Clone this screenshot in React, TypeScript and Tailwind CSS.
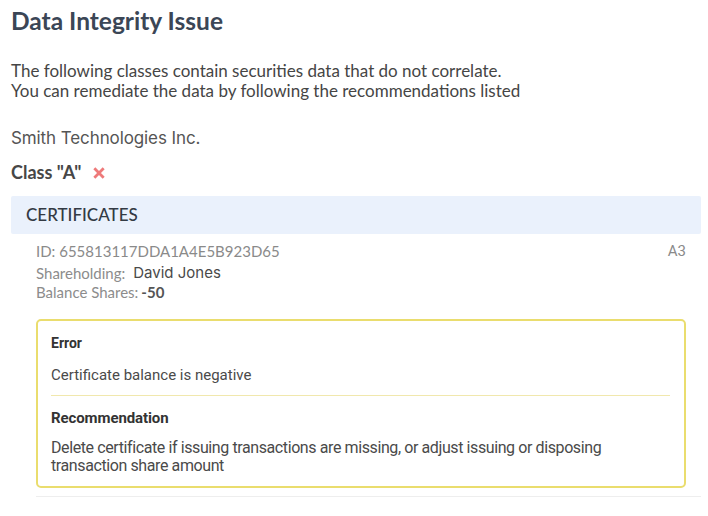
import React from "react";

export default function App() {
  return (
    <div className="w-[708px] h-[516px] bg-white overflow-hidden relative">
      <div className="pl-[11px] pr-[7px]">
        <h1 className="pt-[7px] text-[24.5px] leading-[28px] font-bold text-[#3b4656] font-['Lato',sans-serif]">
          Data Integrity Issue
        </h1>
        <div className="mt-[26px] text-[17px] leading-[20px] text-[#454545] font-['Lato',sans-serif]">
          <p>The following classes contain securities data that do not correlate.</p>
          <p>You can remediate the data by following the recommendations listed</p>
        </div>
        <p className="mt-[27px] text-[17px] leading-[20px] text-[#555] font-['Inter',sans-serif] tracking-[-0.1px]">
          Smith Technologies Inc.
        </p>
        <div className="mt-[14px] flex items-center gap-[11px] h-[20px]">
          <span className="text-[18px] font-bold text-[#474747] font-['Lato',sans-serif] tracking-[0px]">Class "A"</span>
          <svg width="14" height="14" viewBox="0 0 12 12" className="mt-[1px]">
            <path d="M2 2 L10 10 M10 2 L2 10" stroke="#ee7a7a" strokeWidth="2.4" strokeLinecap="butt" />
          </svg>
        </div>
        <div className="mt-[14px] w-[690px] h-[38px] bg-[#eaf1fc] rounded-[2px] flex items-center pl-[15px]">
          <span className="text-[17px] font-medium text-[#333a44] font-['Lato',sans-serif]">CERTIFICATES</span>
        </div>
        <div className="pl-[25px] w-[690px]">
          <div className="mt-[8px] flex justify-between items-center pr-[15px] h-[18px]">
            <span className="text-[15px] text-[#8a8a8a] font-['Lato',sans-serif]">ID: 655813117DDA1A4E5B923D65</span>
            <span className="text-[15px] text-[#8a8a8a] font-['Roboto',sans-serif]">A3</span>
          </div>
          <div className="mt-[4px] flex items-center h-[18px] text-[15px]">
            <span className="text-[#8c8c8c] font-['Lato',sans-serif]">Shareholding:</span>
            <span className="ml-[8px] text-[#4a4a4a] font-['Inter',sans-serif]">David Jones</span>
          </div>
          <div className="mt-[1px] flex items-center h-[18px] text-[15px] font-['Lato',sans-serif]">
            <span className="text-[#8c8c8c]">Balance Shares:</span>
            <span className="ml-[3px] text-[#555] font-bold">-50</span>
          </div>
          <div className="mt-[18px] w-[650px] h-[169px] border-2 border-[#eadd6e] rounded-[5px] px-[13px] font-['Roboto',sans-serif]">
            <p className="mt-[13px] text-[14px] leading-[18px] font-bold text-[#333]">Error</p>
            <p className="mt-[14px] text-[15px] leading-[18px] text-[#4a4a4a]">Certificate balance is negative</p>
            <div className="mt-[11px] h-px bg-[#f1e8ad] mr-[1px]" />
            <p className="mt-[13px] text-[15px] leading-[18px] font-bold text-[#333] tracking-[-0.1px]">Recommendation</p>
            <p className="mt-[12px] text-[16px] leading-[18px] text-[#4a4a4a] tracking-[-0.4px]">
              Delete certificate if issuing transactions are missing, or adjust issuing or disposing
              <br />
              transaction share amount
            </p>
          </div>
          <div className="mt-[8px] h-px bg-[#eeeeee] w-[665px]" />
        </div>
      </div>
    </div>
  );
}
